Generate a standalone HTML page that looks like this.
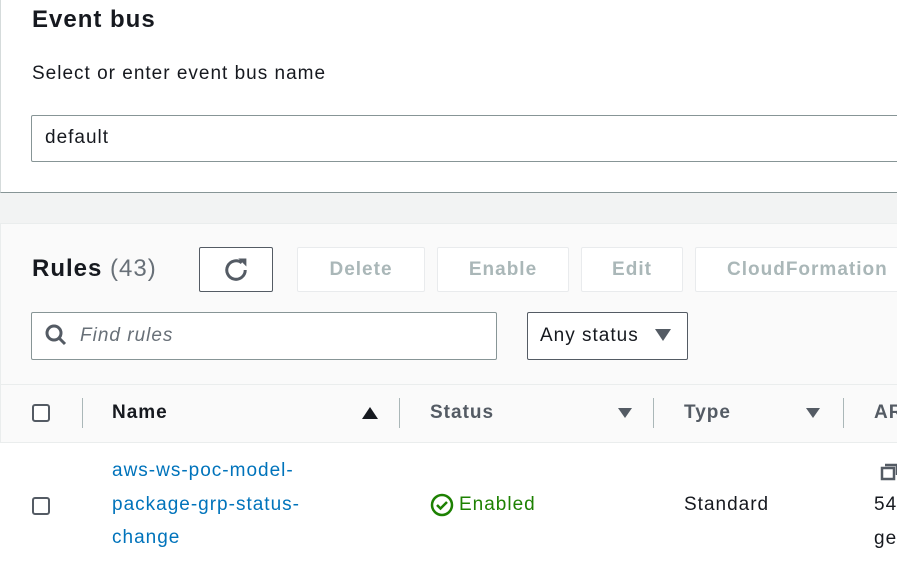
<!DOCTYPE html><html><head><style>
body{margin:0;width:897px;height:562px;overflow:hidden;background:#f2f3f3;font-family:"Liberation Sans",sans-serif;color:#16191f;position:relative;letter-spacing:1px}
.a{position:absolute;white-space:nowrap}
.btn{position:absolute;top:247px;height:45px;border:1px solid #e9ebed;border-radius:2px;background:#fff;color:#aab7b8;font-weight:bold;font-size:19px;display:flex;align-items:center;justify-content:center;box-sizing:border-box}
.h{font-weight:bold;font-size:19px;color:#545b64}
.sep{position:absolute;top:398px;width:1px;height:30px;background:#aab7b8}
.cb{position:absolute;width:18px;height:18px;border:2px solid #545b64;border-radius:3px;box-sizing:border-box;background:#fff}
</style></head><body>
<div class="a" style="left:0;top:0;width:897px;height:192px;background:#fff;border-bottom:1px solid #879596;border-left:1px solid #d5dbdb"></div>
<div class="a" style="left:32px;top:6px;font-size:24px;font-weight:bold">Event bus</div>
<div class="a" style="left:32px;top:63px;font-size:19px">Select or enter event bus name</div>
<div class="a" style="left:31px;top:115px;width:880px;height:47px;border:1px solid #879596;border-radius:2px;background:#fff;box-sizing:border-box"></div>
<div class="a" style="left:45px;top:127px;font-size:19px">default</div>
<div class="a" style="left:0;top:223px;width:897px;height:339px;background:#fafafa;border-left:1px solid #eaeded;border-top:1px solid #eaeded"></div>
<div class="a" style="left:32px;top:255px;font-size:24px"><b>Rules</b> <span style="color:#687078">(43)</span></div>
<div class="btn" style="left:199px;width:74px;border-color:#545b64;color:#545b64"><svg width="30" height="30" viewBox="0 0 26 26"><path d="M21 13a8 8 0 1 1-3-6.2" fill="none" stroke="#545b64" stroke-width="2.6"/><path d="M15 3h7v7z" fill="#545b64"/></svg></div>
<div class="btn" style="left:297px;width:128px">Delete</div>
<div class="btn" style="left:437px;width:132px">Enable</div>
<div class="btn" style="left:581px;width:102px">Edit</div>
<div class="btn" style="left:695px;width:220px;justify-content:flex-start;padding-left:31px">CloudFormation</div>
<div class="a" style="left:31px;top:312px;width:466px;height:48px;border:1px solid #879596;border-radius:2px;background:#fff;box-sizing:border-box"></div>
<svg class="a" style="left:44px;top:323px" width="24" height="24" viewBox="0 0 24 24"><circle cx="10" cy="10" r="7" fill="none" stroke="#545b64" stroke-width="3"/><path d="M15 15l6 6" stroke="#545b64" stroke-width="3"/></svg>
<div class="a" style="left:80px;top:325px;font-size:19px;font-style:italic;color:#687078">Find rules</div>
<div class="a" style="left:527px;top:312px;width:161px;height:48px;border:1px solid #545b64;border-radius:2px;background:#fff;box-sizing:border-box"></div>
<div class="a" style="left:540px;top:325px;font-size:19px">Any status</div>
<div class="a" style="left:655px;top:329px;width:0;height:0;border-left:8px solid transparent;border-right:8px solid transparent;border-top:12px solid #545b64"></div>
<div class="a" style="left:0;top:384px;width:897px;height:1px;background:#eaeded"></div>
<div class="a" style="left:0;top:442px;width:897px;height:120px;background:#fff;border-top:1px solid #eaeded"></div>
<div class="cb" style="left:32px;top:404px"></div>
<div class="sep" style="left:82px"></div>
<div class="a h" style="left:112px;top:402px;color:#16191f">Name</div>
<div class="a" style="left:362px;top:407px;width:0;height:0;border-left:8px solid transparent;border-right:8px solid transparent;border-bottom:12px solid #16191f"></div>
<div class="sep" style="left:399px"></div>
<div class="a h" style="left:430px;top:402px">Status</div>
<div class="a" style="left:618px;top:408px;width:0;height:0;border-left:7px solid transparent;border-right:7px solid transparent;border-top:10px solid #545b64"></div>
<div class="sep" style="left:653px"></div>
<div class="a h" style="left:684px;top:402px">Type</div>
<div class="a" style="left:806px;top:408px;width:0;height:0;border-left:7px solid transparent;border-right:7px solid transparent;border-top:10px solid #545b64"></div>
<div class="sep" style="left:843px"></div>
<div class="a h" style="left:874px;top:402px">ARN</div>
<div class="cb" style="left:32px;top:497px"></div>
<div class="a" style="left:112px;top:454px;font-size:19px;line-height:33.5px;color:#0073bb">aws-ws-poc-model-<br>package-grp-status-<br>change</div>
<div class="a" style="left:430px;top:493px;font-size:19px;color:#1d8102;display:flex;align-items:center;gap:5px"><svg width="24" height="24" viewBox="0 0 24 24"><circle cx="12" cy="12" r="10" fill="none" stroke="#1d8102" stroke-width="2.5"/><path d="M7 12l3.5 3.5L17 9" fill="none" stroke="#1d8102" stroke-width="2.5"/></svg>Enabled</div>
<div class="a" style="left:684px;top:494px;font-size:19px">Standard</div>
<svg class="a" style="left:880px;top:462px" width="20" height="20" viewBox="0 0 20 20"><rect x="2" y="6" width="12" height="11" fill="none" stroke="#545b64" stroke-width="2.5"/><path d="M5 3h12v10" fill="none" stroke="#545b64" stroke-width="2.5"/></svg>
<div class="a" style="left:874px;top:494px;font-size:19px">54</div>
<div class="a" style="left:874px;top:528px;font-size:19px">ge</div>
</body></html>
